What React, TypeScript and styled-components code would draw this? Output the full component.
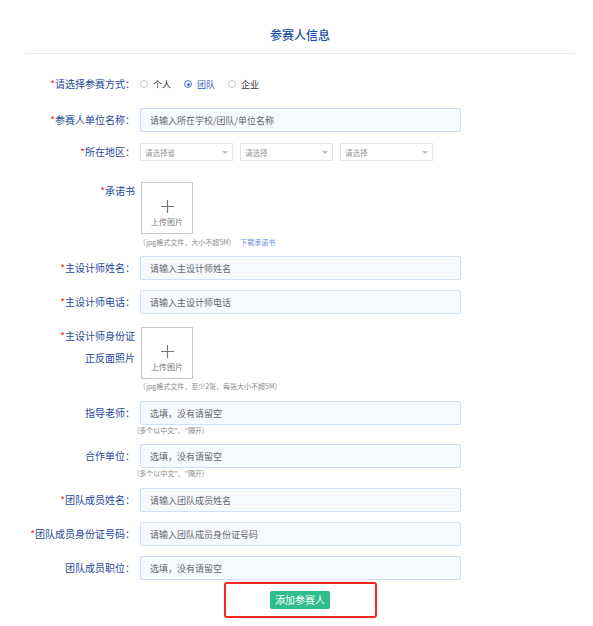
import React from 'react';
import styled, { createGlobalStyle } from 'styled-components';

const GlobalStyle = createGlobalStyle`
  html, body { margin: 0; padding: 0; background: #fff; }
  body { font-family: "Noto Sans CJK SC", "Noto Sans", sans-serif; }
  * { box-sizing: border-box; }
`;

const Page = styled.div`
  width: 593px;
  min-height: 626px;
  padding: 0 18px 0 25px;
  background: #fff;
`;

const Header = styled.header`
  padding: 27px 0 10px;
  border-bottom: 1px solid #ebebeb;
  text-align: center;
`;

const Title = styled.h1`
  margin: 0;
  font-size: 12px;
  line-height: 16px;
  font-weight: 500;
  color: #1c4fae;
`;

const Form = styled.form`
  display: flex;
  flex-direction: column;
  margin: 0;
`;

const Row = styled.div<{ $mt: number; $top?: boolean }>`
  display: flex;
  align-items: ${(p) => (p.$top ? 'flex-start' : 'center')};
  margin-top: ${(p) => p.$mt}px;
`;

const Label = styled.label<{ $multi?: boolean }>`
  flex: 0 0 110px;
  width: 110px;
  margin-right: 5px;
  margin-top: ${(p) => (p.$multi ? '-2px' : '0')};
  text-align: right;
  font-size: 10px;
  line-height: ${(p) => (p.$multi ? '22px' : '16px')};
  color: #1f4a9c;
  white-space: nowrap;
`;

const Req = styled.span`
  color: #e8231a;
`;

const TextInput = styled.input`
  width: 321px;
  height: 24px;
  border: 1px solid #cfe0fa;
  border-radius: 2px;
  background: #f6f9fe;
  padding: 0 9px;
  font-family: inherit;
  font-size: 9px;
  color: #555;
  outline: none;
  &::placeholder {
    color: #666;
  }
`;

const RadioGroup = styled.div`
  display: flex;
  align-items: center;
  height: 16px;
`;

const RadioItem = styled.span<{ $on?: boolean }>`
  display: inline-flex;
  align-items: center;
  margin-right: 13px;
  font-size: 9px;
  color: ${(p) => (p.$on ? '#2f5db8' : '#333')};
`;

const RadioDot = styled.span<{ $on?: boolean }>`
  width: 8px;
  height: 8px;
  border-radius: 50%;
  border: 1px solid ${(p) => (p.$on ? '#4d7ad6' : '#c4c4c4')};
  margin-right: 5px;
  display: flex;
  align-items: center;
  justify-content: center;
  &::after {
    content: '';
    width: 3px;
    height: 3px;
    border-radius: 50%;
    background: #3f6fd0;
    display: ${(p) => (p.$on ? 'block' : 'none')};
  }
`;

const Selects = styled.div`
  display: flex;
  gap: 7px;
`;

const Select = styled.div`
  width: 93px;
  height: 18px;
  border: 1px solid #e6e6e6;
  display: flex;
  align-items: center;
  justify-content: space-between;
  padding: 0 4px;
  font-size: 7.5px;
  color: #999;
`;

const Caret = styled.span`
  width: 0;
  height: 0;
  border-left: 3px solid transparent;
  border-right: 3px solid transparent;
  border-top: 3px solid #bdbdbd;
`;

const UploadBox = styled.div`
  width: 52px;
  height: 52px;
  margin-left: 1px;
  border: 1px solid #c9c9c9;
  background: #fff;
  display: flex;
  flex-direction: column;
  align-items: center;
  padding-top: 17px;
`;

const UploadText = styled.span`
  margin-top: 4px;
  font-size: 8px;
  line-height: 10px;
  color: #777;
`;

const Hint = styled.div<{ $mt: number; $indent: number }>`
  margin-top: ${(p) => p.$mt}px;
  padding-left: ${(p) => 115 + p.$indent}px;
  font-size: 7px;
  line-height: 10px;
  color: #8a8a8a;
  white-space: nowrap;
`;

const HintLink = styled.a`
  margin-left: 9px;
  color: #6a8fe6;
  text-decoration: none;
`;

const ButtonFrame = styled.div`
  align-self: center;
  margin-top: 2px;
  width: 153px;
  height: 36px;
  border: 2px solid #f5281c;
  border-radius: 3px;
  display: flex;
  align-items: center;
  justify-content: center;
`;

const AddButton = styled.button`
  height: 18px;
  padding: 0 5px;
  border: none;
  border-radius: 2px;
  background: #2ebd8b;
  color: #fff;
  font-family: inherit;
  font-size: 10px;
  line-height: 18px;
  cursor: pointer;
`;

const PlusIcon = () => (
  <svg width="13" height="13" viewBox="0 0 13 13">
    <path d="M6.5 0V13M0 6.5H13" stroke="#777" strokeWidth="1.2" fill="none" />
  </svg>
);

const Upload = () => (
  <UploadBox>
    <PlusIcon />
    <UploadText>上传图片</UploadText>
  </UploadBox>
);

export default function App() {
  return (
    <>
      <GlobalStyle />
      <Page>
        <Header>
          <Title>参赛人信息</Title>
        </Header>
        <Form onSubmit={(e) => e.preventDefault()}>
          <Row $mt={22}>
            <Label>
              <Req>*</Req>请选择参赛方式：
            </Label>
            <RadioGroup>
              <RadioItem>
                <RadioDot />
                个人
              </RadioItem>
              <RadioItem $on>
                <RadioDot $on />
                团队
              </RadioItem>
              <RadioItem>
                <RadioDot />
                企业
              </RadioItem>
            </RadioGroup>
          </Row>

          <Row $mt={16}>
            <Label>
              <Req>*</Req>参赛人单位名称：
            </Label>
            <TextInput placeholder="请输入所在学校/团队/单位名称" />
          </Row>

          <Row $mt={11}>
            <Label>
              <Req>*</Req>所在地区：
            </Label>
            <Selects>
              <Select>
                请选择省
                <Caret />
              </Select>
              <Select>
                请选择
                <Caret />
              </Select>
              <Select>
                请选择
                <Caret />
              </Select>
            </Selects>
          </Row>

          <Row $mt={21} $top>
            <Label $multi>
              <Req>*</Req>承诺书
            </Label>
            <Upload />
          </Row>
          <Hint $mt={3} $indent={3}>
            (jpg格式文件，大小不超5M)
            <HintLink href="#">下载承诺书</HintLink>
          </Hint>

          <Row $mt={9}>
            <Label>
              <Req>*</Req>主设计师姓名：
            </Label>
            <TextInput placeholder="请输入主设计师姓名" />
          </Row>

          <Row $mt={10}>
            <Label>
              <Req>*</Req>主设计师电话：
            </Label>
            <TextInput placeholder="请输入主设计师电话" />
          </Row>

          <Row $mt={13} $top>
            <Label $multi>
              <Req>*</Req>主设计师身份证
              <br />
              正反面照片
            </Label>
            <Upload />
          </Row>
          <Hint $mt={2} $indent={3}>
            (jpg格式文件，至少2张，每张大小不超5M)
          </Hint>

          <Row $mt={10}>
            <Label>指导老师：</Label>
            <TextInput placeholder="选填，没有请留空" />
          </Row>
          <Hint $mt={0} $indent={-3}>
            (多个以中文"、"隔开)
          </Hint>

          <Row $mt={9}>
            <Label>合作单位：</Label>
            <TextInput placeholder="选填，没有请留空" />
          </Row>
          <Hint $mt={0} $indent={-3}>
            (多个以中文"、"隔开)
          </Hint>

          <Row $mt={10}>
            <Label>
              <Req>*</Req>团队成员姓名：
            </Label>
            <TextInput placeholder="请输入团队成员姓名" />
          </Row>

          <Row $mt={10}>
            <Label>
              <Req>*</Req>团队成员身份证号码：
            </Label>
            <TextInput placeholder="请输入团队成员身份证号码" />
          </Row>

          <Row $mt={10}>
            <Label>团队成员职位：</Label>
            <TextInput placeholder="选填，没有请留空" />
          </Row>

          <ButtonFrame>
            <AddButton type="button">添加参赛人</AddButton>
          </ButtonFrame>
        </Form>
      </Page>
    </>
  );
}
